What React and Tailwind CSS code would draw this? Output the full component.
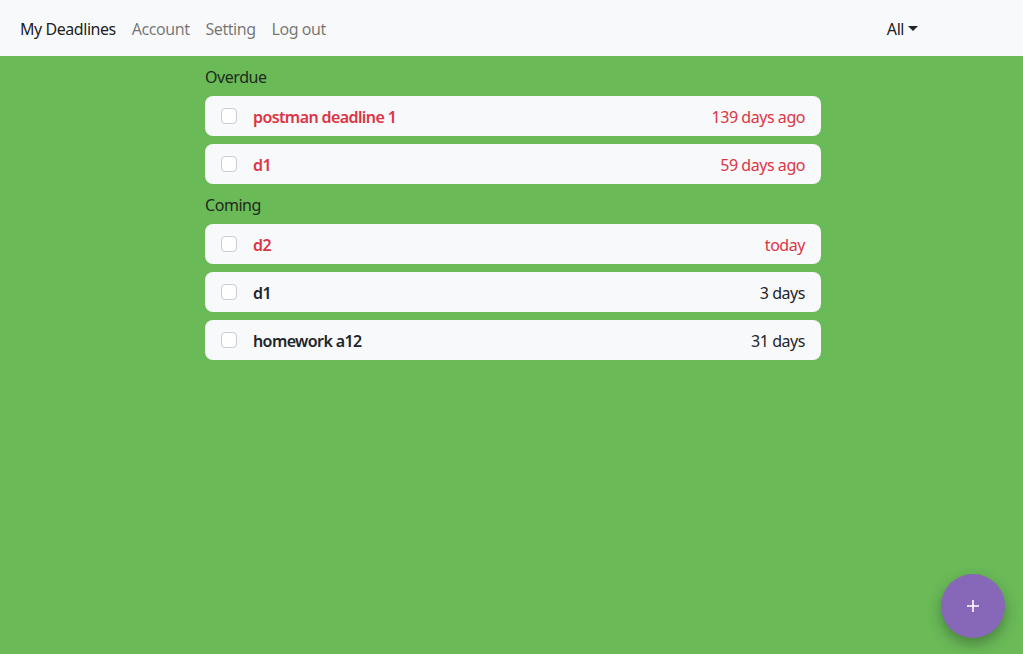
import React from "react";

const Row = ({ title, right, red, redRight }) => (
  <div className="flex h-10 items-center rounded-lg bg-[#f8f9fa] pl-4 pr-4">
    <span className="h-4 w-4 rounded-[4px] border border-[#c9ccd0] bg-white" />
    <span className={"ml-4 mt-[2px] text-[16px] font-semibold tracking-[-0.6px] " + (red ? "text-[#dc3545]" : "text-[#212529]")}>{title}</span>
    <span className={"ml-auto mt-[2px] text-[16px] " + (redRight ? "text-[#dc3545]" : "text-[#212529]")}>{right}</span>
  </div>
);

export default function App() {
  return (
    <div className="relative h-[654px] w-full overflow-hidden bg-[#6aba58] tracking-[-0.45px]" style={{ fontFamily: '"Noto Sans", "Open Sans", sans-serif' }}>
      <nav className="flex h-14 items-center bg-[#f8f9fa] pl-[20px] pt-[2px] text-[16px]">
        <span className="text-black/90">My Deadlines</span>
        <span className="ml-4 text-black/55">Account</span>
        <span className="ml-4 text-black/55">Setting</span>
        <span className="ml-4 text-black/55">Log out</span>
        <div className="ml-auto mr-[105px] flex items-center text-black/90">
          <span>All</span>
          <span className="ml-1 mt-[-1px] h-0 w-0 border-x-[5px] border-t-[5px] border-x-transparent border-t-[#212529]" />
        </div>
      </nav>
      <div className="ml-[205px] w-[616px]">
        <div className="mt-2 pt-[1px] text-[16px] leading-6 text-[#1e2a1c]">Overdue</div>
        <div className="mt-[7px] flex flex-col gap-2">
          <Row title="postman deadline 1" right="139 days ago" red redRight />
          <Row title="d1" right="59 days ago" red redRight />
        </div>
        <div className="mt-[9px] text-[16px] leading-6 text-[#1e2a1c]">Coming</div>
        <div className="mt-[7px] flex flex-col gap-2">
          <Row title="d2" right="today" red redRight />
          <Row title="d1" right="3 days" />
          <Row title="homework a12" right="31 days" />
        </div>
      </div>
      <button className="absolute left-[941px] top-[574px] flex h-16 w-16 items-center justify-center rounded-full bg-[#8767b7] text-white shadow-[0_6px_14px_rgba(0,0,0,0.3)]">
        <svg width="14" height="14" viewBox="0 0 14 14"><path d="M7 1v12M1 7h12" stroke="white" strokeWidth="1.6" /></svg>
      </button>
    </div>
  );
}
